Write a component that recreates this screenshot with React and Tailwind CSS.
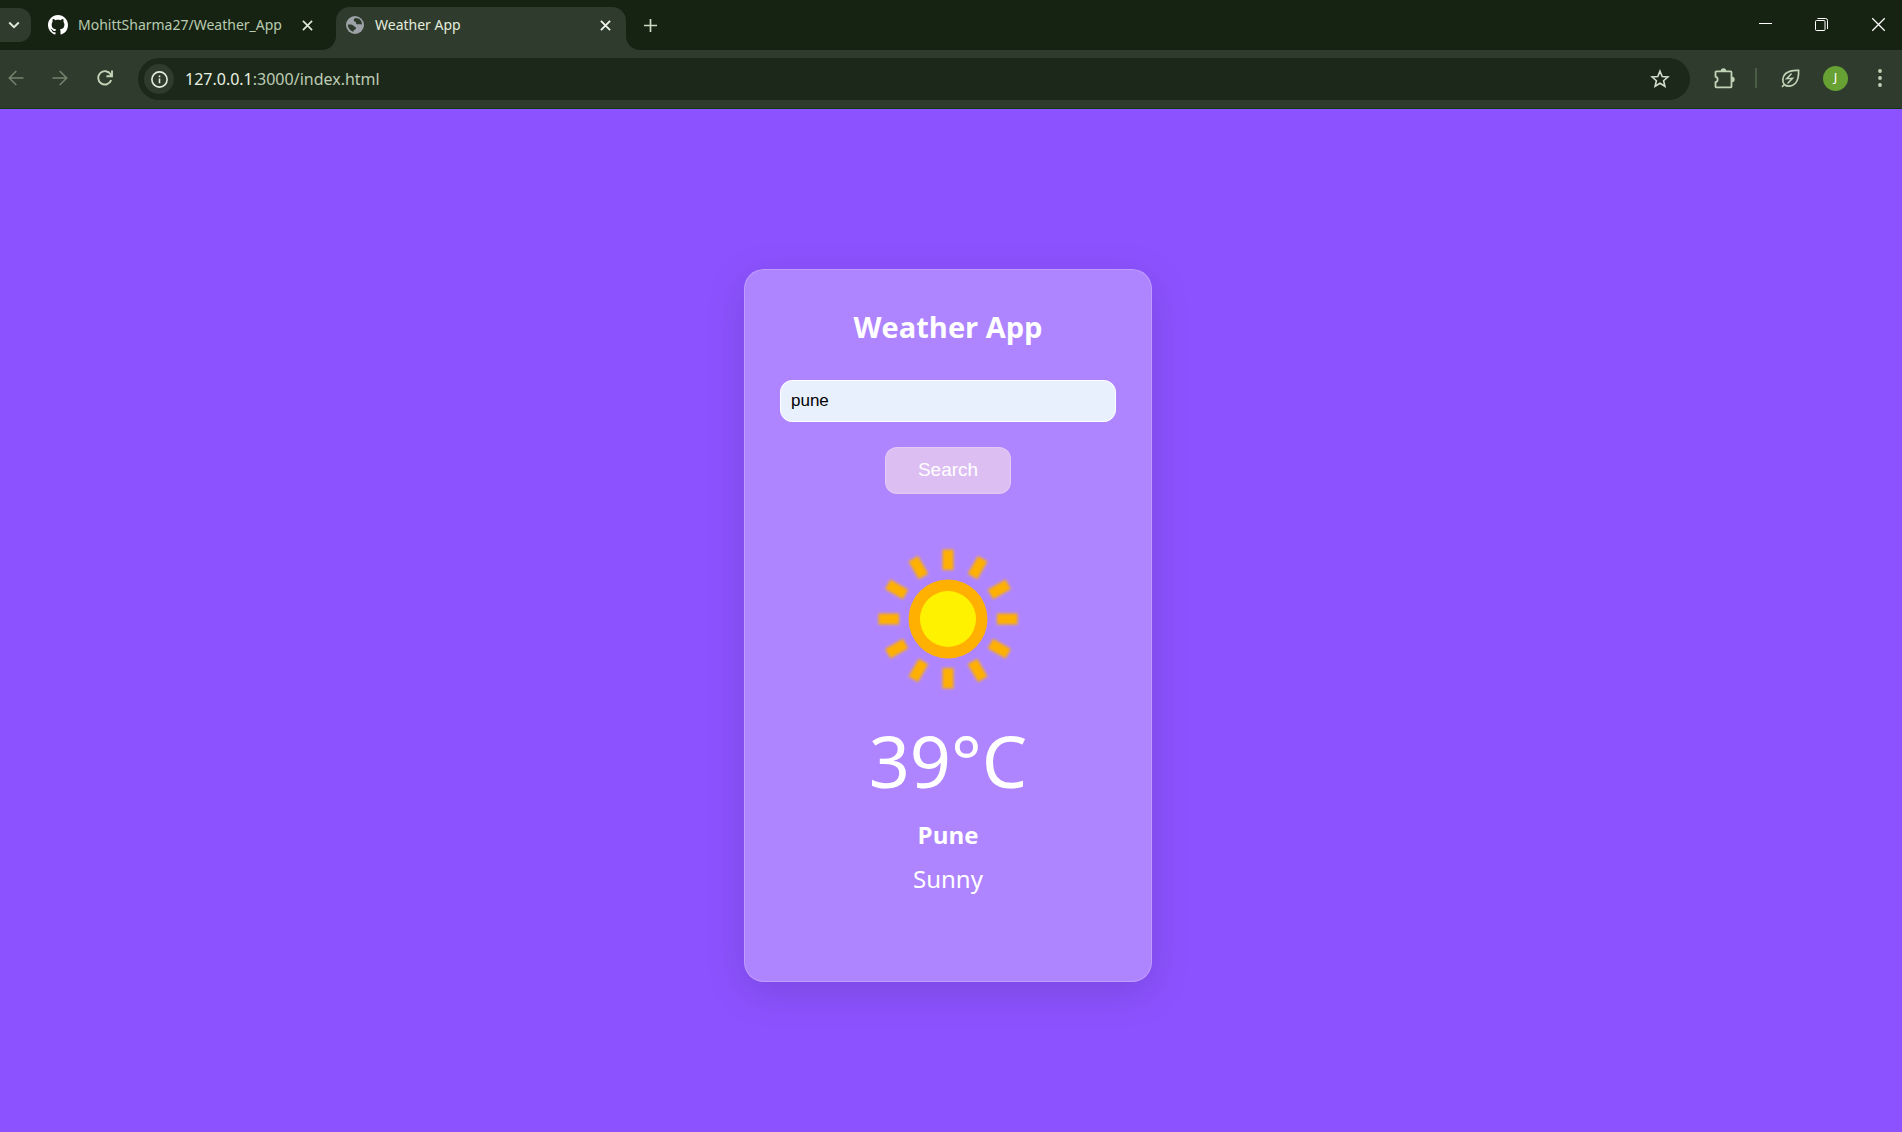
import { useState } from "react";

function Github() {
  return (
    <svg className="size-5 shrink-0" viewBox="0 0 16 16" fill="#ffffff" aria-hidden="true">
      <path d="M8 0C3.58 0 0 3.58 0 8c0 3.54 2.29 6.53 5.47 7.59.4.07.55-.17.55-.38 0-.19-.01-.82-.01-1.49-2.01.37-2.53-.49-2.69-.94-.09-.23-.48-.94-.82-1.13-.28-.15-.68-.52-.01-.53.63-.01 1.08.58 1.23.82.72 1.21 1.87.87 2.33.66.07-.52.28-.87.51-1.07-1.78-.2-3.64-.89-3.64-3.95 0-.87.31-1.59.82-2.15-.08-.2-.36-1.02.08-2.12 0 0 .67-.21 2.2.82.64-.18 1.32-.27 2-.27s1.36.09 2 .27c1.53-1.04 2.2-.82 2.2-.82.44 1.1.16 1.92.08 2.12.51.56.82 1.27.82 2.15 0 3.07-1.87 3.75-3.65 3.95.29.25.54.73.54 1.48 0 1.07-.01 1.93-.01 2.2 0 .21.15.46.55.38A8.01 8.01 0 0 0 16 8c0-4.42-3.58-8-8-8z" />
    </svg>
  );
}

function Globe() {
  return (
    <svg className="size-[18px] shrink-0" viewBox="0 0 18 18" aria-hidden="true">
      <circle cx="9" cy="9" r="9" fill="#9da2a8" />
      <path
        d="M9.600 2.100c-1.500.5-2 1.500-1.800 2.500.2.9 1.100 1.300 2.100 1.300-.1 1.400.5 2.300 1.900 2.300 1.500.1 2.400-.2 4.100.4C16.200 4.900 13.400 2 9.600 2.100zM1.900 8.600c1.500-.2 3.300-.1 4.600.3 1.200.4 1.300 1.600 2.300 1.900 1.200.3 1.300 1 1 1.900-.5 1.300-1.800 1-2.100 1.600-.2.500 0 1.100-.1 1.500C4.500 15.200 1.900 12.500 1.900 8.600z"
        fill="#2f3c2d"
      />
    </svg>
  );
}

function Cross({ className }) {
  return (
    <svg className={className} viewBox="0 0 12 12" fill="none" stroke="currentColor" aria-hidden="true">
      <path d="M1 1l10 10M11 1L1 11" />
    </svg>
  );
}

function Arrow({ flip }) {
  return (
    <svg
      className={flip ? "size-4 rotate-180" : "size-4"}
      viewBox="0 0 16 16"
      fill="none"
      stroke="currentColor"
      strokeWidth="1.6"
      aria-hidden="true"
    >
      <path d="M15.500 8H1.500M8.300 1L1.300 8l7 7" />
    </svg>
  );
}

function Reload() {
  return (
    <svg className="size-4" viewBox="0 0 16 16" fill="none" stroke="currentColor" strokeWidth="1.900" aria-hidden="true">
      <path d="M14.200 10.200A6.700 6.700 0 1 1 13.800 4.600L14.800 6.200M15 .6v5.700H9.400" />
    </svg>
  );
}

function Sun() {
  const angles = [0, 30, 60, 90, 120, 150, 180, 210, 240, 270, 300, 330];
  return (
    <svg className="size-40" viewBox="-80 -80 160 160" role="img" aria-label="Sunny">
      <defs>
        <filter id="soft" x="-20%" y="-20%" width="140%" height="140%">
          <feGaussianBlur stdDeviation="1.4" />
        </filter>
      </defs>
      <g filter="url(#soft)" fill="#ffb000">
        {angles.map((a) => (
          <rect key={a} x="-5.500" y="-69.500" width="11" height="20.500" transform={`rotate(${a})`} />
        ))}
      </g>
      <circle r="39.500" fill="#ffb000" />
      <circle r="28" fill="#fff200" />
    </svg>
  );
}

function TabStrip() {
  return (
    <header className="flex h-[50px] items-end bg-[#162313]">
      <button
        type="button"
        aria-label="Search tabs"
        className="mb-2 flex h-[34px] w-[31px] items-center justify-center rounded-r-xl bg-[#2f3c2d] pr-1 text-[#dfe9d8]"
      >
        <svg className="h-2 w-3" viewBox="0 0 12 8" fill="none" stroke="currentColor" strokeWidth="2" aria-hidden="true">
          <path d="M1.200 1.500L6 6.200l4.800-4.700" />
        </svg>
      </button>
      <div className="flex h-[43px] w-[305px] items-center pb-[7px] pl-[17px] pr-[23px]">
        <Github />
        <span className="ml-2.5 flex-1 whitespace-nowrap text-sm text-[#b9cbb0]">MohittSharma27/Weather_App</span>
        <button type="button" aria-label="Close MohittSharma27/Weather_App" className="text-[#dfe9d8]">
          <Cross className="size-[11px] stroke-[1.8]" />
        </button>
      </div>
      <div className="relative flex h-[43px] w-[290px] items-center rounded-t-[14px] bg-[#2f3c2d] pb-[7px] pl-2.5 pr-[15px]">
        <span className="absolute -left-[14px] bottom-0 size-[14px] overflow-hidden bg-[#2f3c2d]">
          <span className="block size-full rounded-br-[14px] bg-[#162313]" />
        </span>
        <span className="absolute -right-[14px] bottom-0 size-[14px] overflow-hidden bg-[#2f3c2d]">
          <span className="block size-full rounded-bl-[14px] bg-[#162313]" />
        </span>
        <Globe />
        <span className="ml-[11px] flex-1 text-sm text-[#e3ecdc]">Weather App</span>
        <button type="button" aria-label="Close Weather App" className="text-[#f0f5ec]">
          <Cross className="size-[11px] stroke-[2]" />
        </button>
      </div>
      <button type="button" aria-label="New tab" className="ml-[18px] flex h-[50px] items-center text-[#c9dac0]">
        <svg className="size-[13px]" viewBox="0 0 13 13" stroke="currentColor" strokeWidth="1.700" aria-hidden="true">
          <path d="M6.500 0v13M0 6.500h13" />
        </svg>
      </button>
      <div className="ml-auto flex h-[50px] items-center gap-[43px] pb-0.5 pr-4 text-white">
        <button type="button" aria-label="Minimize">
          <svg className="size-[13px]" viewBox="0 0 13 13" fill="currentColor" aria-hidden="true">
            <path d="M0 5h13v1H0z" />
          </svg>
        </button>
        <button type="button" aria-label="Restore">
          <svg className="size-[13px]" viewBox="0 0 13 13" fill="none" stroke="currentColor" aria-hidden="true">
            <rect x=".5" y="2.500" width="9.500" height="10" rx="1" />
            <path d="M2.500 .5h8a2 2 0 0 1 2 2v8.500" />
          </svg>
        </button>
        <button type="button" aria-label="Close window">
          <Cross className="size-[15px] stroke-1" />
        </button>
      </div>
    </header>
  );
}

function Toolbar() {
  return (
    <nav className="flex h-[59px] items-center border-b border-[#123a10] bg-[#2f3c2d] pb-0.5 pl-2 pr-5 text-[#c1d3b7]">
      <button type="button" aria-label="Back" className="text-[#74836d]">
        <Arrow />
      </button>
      <button type="button" aria-label="Forward" className="ml-[28px] text-[#74836d]">
        <Arrow flip />
      </button>
      <button type="button" aria-label="Reload" className="ml-[29px]">
        <Reload />
      </button>
      <div className="ml-[25px] mt-0.5 flex h-[42px] flex-1 items-center rounded-full bg-[#1c291a] pl-1.5 pr-5">
        <button
          type="button"
          aria-label="Site information"
          className="flex size-[30px] items-center justify-center rounded-full bg-[#2f3c2d] text-[#e3ecdc]"
        >
          <svg className="size-[17px]" viewBox="0 0 17 17" fill="none" stroke="currentColor" strokeWidth="1.600" aria-hidden="true">
            <circle cx="8.500" cy="8.500" r="7.600" />
            <path d="M8.500 7.600v4.700M8.500 4.400v1.800" />
          </svg>
        </button>
        <div className="ml-[11px] flex-1 text-base text-[#bccbb4]">
          <span className="text-[#e8f0e2]">127.0.0.1</span>:3000/index.html
        </div>
        <button type="button" aria-label="Bookmark this tab">
          <svg className="size-5" viewBox="0 0 20 20" fill="none" stroke="#d3ddcc" strokeWidth="1.600" aria-hidden="true">
            <path d="M10 2.200l2.200 5.300 5.700.5-4.300 3.700 1.300 5.600L10 14.300l-4.900 3 1.300-5.600L2.100 8l5.700-.5z" />
          </svg>
        </button>
      </div>
      <button type="button" aria-label="Extensions" className="ml-6">
        <svg className="h-[21px] w-[21px]" viewBox="0 0 21 21" fill="none" stroke="currentColor" strokeWidth="1.800" aria-hidden="true">
          <path d="M2.500 3.400h14a1 1 0 0 1 1 1v14a1 1 0 0 1-1 1h-14a1 1 0 0 1-1-1v-4.200a2.900 2.900 0 0 0 0-5.600V4.400a1 1 0 0 1 1-1z" />
          <path d="M6.800 3a2.700 2.700 0 0 1 5.400 0zM18 8.700a2.700 2.700 0 0 1 0 5.400z" fill="currentColor" stroke="none" />
        </svg>
      </button>
      <span className="ml-5 h-5 w-0.5 bg-[#4b5c47]" />
      <button type="button" aria-label="Energy saver" className="ml-6">
        <svg className="size-[19px]" viewBox="0 0 19 19" fill="none" stroke="currentColor" strokeWidth="1.700" aria-hidden="true">
          <path d="M1 17.800l2.300-2.300M3.300 15.500C1 12.800 1.300 7.500 4.700 4.500 8 1.700 12.500 1.200 17.600 1.400c.2 5.100-.3 9.600-3.200 12.900-3 3.300-8.300 3.700-11.100 1.200z" />
          <path d="M10.600 4.600L5.700 9.700l5.800-.4-4.900 5.200" strokeWidth="1.500" />
        </svg>
      </button>
      <button
        type="button"
        aria-label="Profile"
        className="ml-[23px] flex size-[25px] items-center justify-center rounded-full bg-[#67a033] text-[13px] text-white"
      >
        J
      </button>
      <button type="button" aria-label="Menu" className="ml-[30px]">
        <svg className="h-[18px] w-1" viewBox="0 0 4 18" fill="currentColor" aria-hidden="true">
          <circle cx="2" cy="2" r="1.900" />
          <circle cx="2" cy="9" r="1.900" />
          <circle cx="2" cy="16" r="1.900" />
        </svg>
      </button>
    </nav>
  );
}

function WeatherCard() {
  const [city, setCity] = useState("pune");
  return (
    <section className="flex w-[408px] flex-col items-center rounded-[20px] border border-white/20 bg-[#af85ff] px-[35px] pb-[84px] pt-9 text-white shadow-[0_10px_40px_rgba(0,0,0,0.13)]">
      <h1 className="font-['Open_Sans','Noto_Sans',sans-serif] text-[29px] font-bold leading-[42px]">Weather App</h1>
      <form className="mt-8 flex w-full flex-col items-center" onSubmit={(e) => e.preventDefault()}>
        <input
          type="text"
          aria-label="City"
          value={city}
          onChange={(e) => setCity(e.target.value)}
          className="h-[42px] w-full rounded-xl border border-white bg-[#e8f0fe] px-2.5 font-['Liberation_Sans',sans-serif] text-[17px] text-black outline-none"
        />
        <button
          type="submit"
          className="mt-[25px] h-[47px] w-[126px] rounded-xl border border-white/20 bg-[#dcbef2] font-['Liberation_Sans',sans-serif] text-[19px]"
        >
          Search
        </button>
      </form>
      <div className="mt-[45px]">
        <Sun />
      </div>
      <p className="mt-3 text-[72px] leading-[98px]">39°C</p>
      <h2 className="mt-2 font-['Open_Sans','Noto_Sans',sans-serif] text-2xl font-bold leading-9">Pune</h2>
      <p className="mt-2 text-2xl leading-9">Sunny</p>
    </section>
  );
}

export default function App() {
  return (
    <div className="flex min-h-screen flex-col font-['Noto_Sans',sans-serif]">
      <TabStrip />
      <Toolbar />
      <main className="flex flex-1 items-center justify-center bg-[#8c52ff] pr-1.5 pt-2.5">
        <WeatherCard />
      </main>
    </div>
  );
}
